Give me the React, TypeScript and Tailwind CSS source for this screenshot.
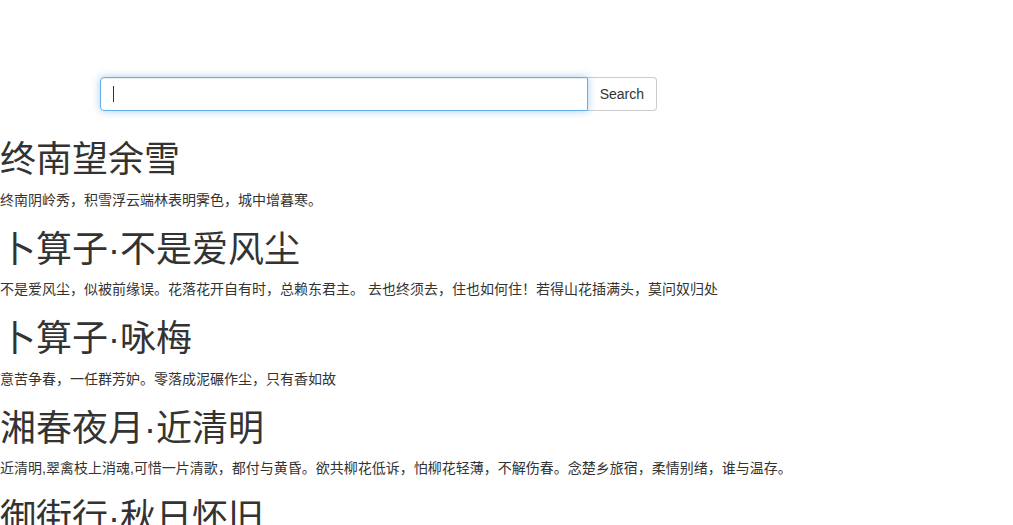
import React from "react";

const poems = [
  { title: "终南望余雪", body: "终南阴岭秀，积雪浮云端林表明霁色，城中增暮寒。" },
  { title: "卜算子·不是爱风尘", body: "不是爱风尘，似被前缘误。花落花开自有时，总赖东君主。 去也终须去，住也如何住！若得山花插满头，莫问奴归处" },
  { title: "卜算子·咏梅", body: "意苦争春，一任群芳妒。零落成泥碾作尘，只有香如故" },
  { title: "湘春夜月·近清明", body: "近清明,翠禽枝上消魂,可惜一片清歌，都付与黄昏。欲共柳花低诉，怕柳花轻薄，不解伤春。念楚乡旅宿，柔情别绪，谁与温存。" },
  { title: "御街行·秋日怀旧", body: "霜风渐紧寒侵被。听孤雁，声嘹唳。一声声送一声悲，云淡碧天如水。" },
];

export default function App() {
  return (
    <div
      className="min-h-[525px] bg-white text-[#333] text-[14px] leading-[20px]"
      style={{ fontFamily: '"Liberation Sans", "Noto Sans CJK SC", sans-serif' }}
    >
      <div className="pt-[77px] pb-[9px] pl-[100px]">
        <div className="flex w-[557px] h-[34px]">
          <div className="relative flex-1">
            <input
              type="text"
              className="w-full h-[34px] px-[12px] py-[6px] border border-[#66afe9] rounded-l-[4px] outline-none caret-transparent shadow-[inset_0_1px_1px_rgba(0,0,0,0.075),0_0_8px_rgba(102,175,233,0.6)] text-[14px] text-[#555]"
            />
            <span className="absolute left-[13px] top-[9px] w-px h-[16px] bg-[#333]" />
          </div>
          <button className="h-[34px] px-[12px] border border-l-0 border-[#ccc] rounded-r-[4px] bg-white text-[14px] text-[#333]">
            Search
          </button>
        </div>
      </div>
      {poems.map((p) => (
        <div key={p.title}>
          <h1 className="mt-[20px] mb-[10px] text-[36px] leading-[39.6px] font-normal">{p.title}</h1>
          <p className="whitespace-nowrap">{p.body}</p>
        </div>
      ))}
    </div>
  );
}
